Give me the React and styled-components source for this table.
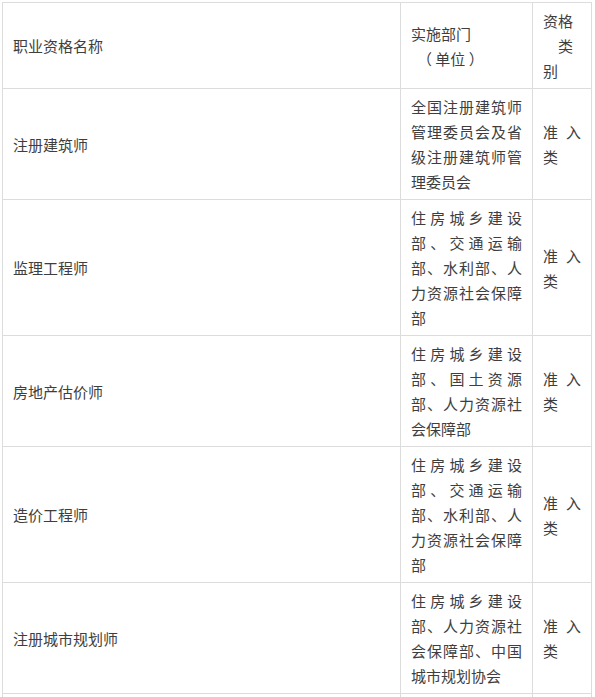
import React from "react";
import styled, { createGlobalStyle } from "styled-components";

const GlobalStyle = createGlobalStyle`
  html, body { margin: 0; padding: 0; background: #ffffff; }
  body { padding: 2px 0 0 2px; }
`;

const Table = styled.table`
  width: 590px;
  table-layout: fixed;
  border-collapse: separate;
  border-spacing: 0;
  font-family: "Noto Sans CJK SC", "Noto Sans", sans-serif;
  font-size: 15px;
  line-height: 25px;
  color: #3e3e3e;
`;

const Col = styled.col`
  width: ${(p) => p.$w}px;
`;

const Cell = styled.td`
  box-sizing: border-box;
  padding: 5px 10px;
  vertical-align: middle;
  border-left: 1px solid #dcdcdc;
  border-top: 1px solid #dcdcdc;
  ${(p) => (p.$last ? "border-right: 1px solid #dcdcdc;" : "")}
  text-align: ${(p) => (p.$justify ? "justify" : "left")};
  text-align-last: left;
  word-break: break-all;
  font-weight: 400;
`;

const Line = styled.span`
  display: block;
  white-space: pre;
  padding-left: ${(p) => p.$indent || 0}px;
`;

const rows = [
  ["注册建筑师", "全国注册建筑师管理委员会及省级注册建筑师管理委员会"],
  ["监理工程师", "住房城乡建设部、交通运输部、水利部、人力资源社会保障部"],
  ["房地产估价师", "住房城乡建设部、国土资源部、人力资源社会保障部"],
  ["造价工程师", "住房城乡建设部、交通运输部、水利部、人力资源社会保障部"],
  ["注册城市规划师", "住房城乡建设部、人力资源社会保障部、中国城市规划协会"],
];

export default function App() {
  return (
    <>
      <GlobalStyle />
      <Table>
        <colgroup>
          <Col $w={398} />
          <Col $w={132} />
          <Col $w={60} />
        </colgroup>
        <tbody>
          <tr>
            <Cell>职业资格名称</Cell>
            <Cell>
              <Line>实施部门</Line>
              <Line $indent={6}>（ 单位 ）</Line>
            </Cell>
            <Cell $last>
              <Line>资格</Line>
              <Line $indent={15}>类</Line>
              <Line>别</Line>
            </Cell>
          </tr>
          {rows.map(([name, dept]) => (
            <tr key={name}>
              <Cell>{name}</Cell>
              <Cell $justify>{dept}</Cell>
              <Cell $justify $last>准入类</Cell>
            </tr>
          ))}
          <tr>
            <Cell />
            <Cell />
            <Cell $last />
          </tr>
        </tbody>
      </Table>
    </>
  );
}
